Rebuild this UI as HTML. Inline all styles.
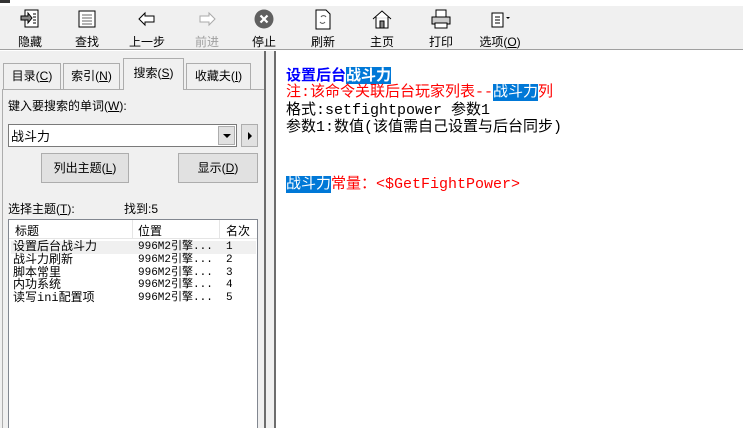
<!DOCTYPE html>
<html style="overflow:hidden;height:428px"><head><meta charset="utf-8"><style>
*{margin:0;padding:0;box-sizing:border-box}
body{width:743px;height:428px;overflow:hidden;background:#f0f0f0;font-family:"Liberation Sans","Noto Sans CJK SC",sans-serif;font-size:12px;color:#000;position:relative}
.a{position:absolute}
.tb{left:0;top:0;width:743px;height:6px;background:#fff}
.btn{position:absolute;top:8px;width:60px;text-align:center;font-size:12px}
.btn svg{display:block;margin:0 auto 3px;width:22px;height:22px}
.btn span{display:block}
.tab{position:absolute;top:62px;height:26px;border:1px solid #adadad;border-bottom:none;background:#f0f0f0;text-align:center;line-height:24px;font-size:12px}
.mono{font-family:"Liberation Mono","WenQuanYi Zen Hei",monospace}
.hl{background:#0078d7;color:#fff}
.pb{position:absolute;border:1px solid #adadad;background:#e1e1e1;text-align:center}
</style></head><body>
<div class="a tb"></div>
<div class="a" style="left:0;top:0;width:10px;height:3px;background:#333"></div>
<div class="btn" style="left:0"><svg viewBox="0 0 22 22"><rect x="6" y="2" width="13" height="17" fill="#fff" stroke="#000"/><path d="M2 8h7v-3l4 5-4 5v-3H2z" fill="#888" stroke="#000"/><path d="M14 6h3M14 9h3M14 12h3M14 15h3" stroke="#000"/></svg><span>隐藏</span></div>
<div class="btn" style="left:57px"><svg viewBox="0 0 22 22"><rect x="3" y="3" width="16" height="16" fill="#fff" stroke="#000"/><path d="M6 7h10M6 10h10M6 13h10M6 16h10" stroke="#666"/></svg><span>查找</span></div>
<div class="btn" style="left:117px"><svg viewBox="0 0 22 22"><path d="M3 11l6-6v3h9v6H9v3z" fill="#fff" stroke="#000"/></svg><span>上一步</span></div>
<div class="btn" style="left:177px;color:#a0a0a0"><svg viewBox="0 0 22 22"><path d="M19 11l-6-6v3H4v6h9v3z" fill="#fff" stroke="#aaa"/></svg><span>前进</span></div>
<div class="btn" style="left:234px"><svg viewBox="0 0 22 22"><circle cx="11" cy="11" r="9.5" fill="#606060"/><path d="M7.5 7.5l7 7M14.5 7.5l-7 7" stroke="#fff" stroke-width="2.2"/></svg><span>停止</span></div>
<div class="btn" style="left:293px"><svg viewBox="0 0 22 22"><path d="M4 2h10l4 4v15H4z" fill="#fff" stroke="#000"/><path d="M9 9a3 3 0 0 1 5 0M13 14a3 3 0 0 1-5 0" fill="none" stroke="#555"/></svg><span>刷新</span></div>
<div class="btn" style="left:352px"><svg viewBox="0 0 22 22"><path d="M2 11L11 3l9 8M5 9v11h12V9" fill="#fff" stroke="#000"/><rect x="9" y="13" width="4" height="7" fill="#888" stroke="#000"/></svg><span>主页</span></div>
<div class="btn" style="left:411px"><svg viewBox="0 0 22 22"><rect x="6" y="2" width="10" height="7" fill="#fff" stroke="#000"/><rect x="2" y="9" width="18" height="7" fill="#ccc" stroke="#000"/><rect x="5" y="15" width="12" height="5" fill="#fff" stroke="#000"/></svg><span>打印</span></div>
<div class="btn" style="left:468px;width:64px"><svg viewBox="0 0 22 22"><rect x="3" y="5" width="11" height="14" fill="#fff" stroke="#000"/><path d="M6 9h5M6 12h5M6 15h5" stroke="#000"/><path d="M17 9l2 2 2-2z" fill="#000"/></svg><span>选项(<u>O</u>)</span></div>
<div class="a" style="left:0;top:49px;width:743px;height:1px;background:#a0a0a0"></div>
<div class="a" style="left:0;top:50px;width:743px;height:1px;background:#fff"></div>

<!-- left pane -->
<div class="tab" style="left:3px;width:58px;top:63px">目录(<u>C</u>)</div>
<div class="tab" style="left:63px;width:57px;top:63px">索引(<u>N</u>)</div>
<div class="tab" style="left:123px;width:61px;top:58px;height:32px;background:#f0f0f0;z-index:2;line-height:28px">搜索(<u>S</u>)</div>
<div class="tab" style="left:186px;width:65px;top:63px">收藏夫(<u>I</u>)</div>
<div class="a" style="left:2px;top:89px;width:264px;height:339px;border:1px solid #adadad;border-right-color:#6d6d6d;border-bottom:none"></div>
<div class="a" style="left:8px;top:97px">键入要搜索的单词(<u>W</u>):</div>
<div class="a" style="left:8px;top:124px;width:229px;height:23px;border:1px solid #7a7a7a;background:#fff"></div>
<div class="a" style="left:11px;top:126px;font-size:13px">战斗力</div>
<div class="a" style="left:218px;top:126px;width:17px;height:19px;background:#e1e1e1;border:1px solid #adadad"></div>
<div class="a" style="left:223px;top:134px;border:4px solid transparent;border-top:4px solid #000;border-bottom:none"></div>
<div class="a" style="left:241px;top:124px;width:17px;height:23px;background:#e1e1e1;border:1px solid #adadad"></div>
<div class="a" style="left:248px;top:132px;border:4px solid transparent;border-left:4px solid #000;border-right:none"></div>
<div class="pb" style="left:41px;top:153px;width:88px;height:30px;line-height:28px">列出主题(<u>L</u>)</div>
<div class="pb" style="left:178px;top:153px;width:80px;height:30px;line-height:28px">显示(<u>D</u>)</div>
<div class="a" style="left:8px;top:200px">选择主题(<u>T</u>):</div>
<div class="a" style="left:124px;top:200px">找到:5</div>
<div class="a" style="left:8px;top:219px;width:250px;height:209px;background:#fff;border:1px solid #828790;border-bottom:none"></div>
<div class="a" style="left:9px;top:220px;width:248px;height:19px;background:#fff;border-bottom:1px solid #e5e5e5"></div>
<div class="a" style="left:15px;top:222px">标题</div>
<div class="a" style="left:132px;top:220px;width:1px;height:19px;background:#e5e5e5"></div>
<div class="a" style="left:138px;top:222px">位置</div>
<div class="a" style="left:219px;top:220px;width:1px;height:19px;background:#e5e5e5"></div>
<div class="a" style="left:226px;top:222px">名次</div>
<div class="a" style="left:11px;top:241px;width:245px;height:13px;background:#f0f0f0"></div>
<div class="a mono" style="left:13px;top:241px;font-size:12px;line-height:12.8px;white-space:pre">设置后台战斗力
战斗力刷新
脚本常里
内功系统
读写ini配置项</div>
<div class="a mono" style="left:138px;top:241px;font-size:11px;line-height:12.8px;white-space:pre">996M2引擎...
996M2引擎...
996M2引擎...
996M2引擎...
996M2引擎...</div>
<div class="a mono" style="left:226px;top:241px;font-size:11px;line-height:12.8px;white-space:pre">1
2
3
4
5</div>

<!-- splitter -->
<div class="a" style="left:264px;top:51px;width:2px;height:377px;background:#6d6d6d"></div>
<div class="a" style="left:274px;top:51px;width:2px;height:377px;background:#6d6d6d"></div>
<div class="a" style="left:276px;top:51px;width:467px;height:377px;background:#fff"></div>

<!-- content -->
<div class="a" style="left:286px;top:66px;font-size:15px;line-height:19px;white-space:pre"><b style="color:#0000ff">设置后台</b><b class="hl">战斗力</b></div>
<div class="a mono" style="left:286px;top:84px;font-size:15px;line-height:17.5px;white-space:pre"><span style="color:#f00">注:该命令关联后台玩家列表--</span><span class="hl">战斗力</span><span style="color:#f00">列</span>
格式:setfightpower 参数1
参数1:数值(该值需自己设置与后台同步)</div>
<div class="a mono" style="left:286px;top:176px;font-size:15px;line-height:18px;white-space:pre"><span class="hl">战斗力</span><span style="color:#f00">常量：<$GetFightPower></span></div>
</body></html>
